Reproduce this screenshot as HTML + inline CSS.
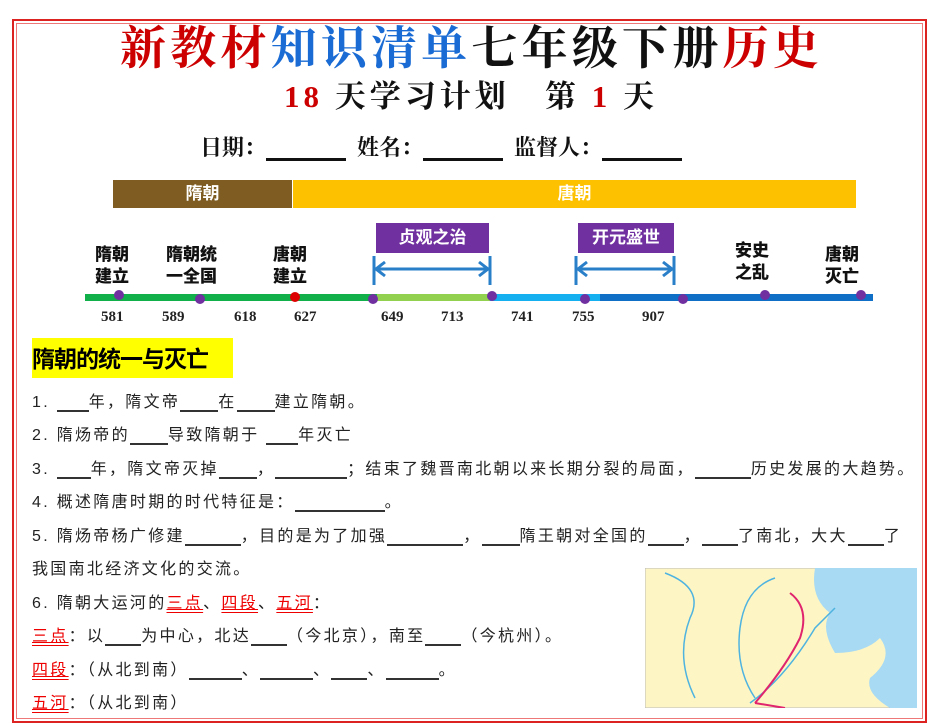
<!DOCTYPE html>
<html><head><meta charset="utf-8"><style>
body{margin:0;width:947px;height:705px;overflow:hidden;background:#fff;font-family:"Liberation Sans","Noto Sans CJK SC",sans-serif;position:relative}
.a{position:absolute;white-space:nowrap}
.b{position:absolute;left:12px;top:19px;width:911px;height:700px;border:2px solid #d22;box-shadow:inset 0 0 0 2px #fff,inset 0 0 0 3px #e77}
.serif{font-family:"Liberation Serif","Noto Serif CJK SC",serif;font-weight:bold}
.lbl{font-family:"Liberation Sans","Noto Sans CJK SC",sans-serif;font-weight:900;font-size:17px;line-height:22px;color:#111}
.yr{font-family:"Liberation Serif",serif;font-weight:bold;font-size:15px;color:#222}
.dot{position:absolute;width:10px;height:10px;border-radius:50%;background:#7030a0}
.q{font-size:16px;color:#222;letter-spacing:2.3px}
u{text-decoration:none;border-bottom:2px solid #333;display:inline-block;line-height:14px}
.r{color:#e00;text-decoration:underline double}
</style></head><body>
<div class="b"></div>
<div class="a serif" style="left:120px;top:22px;font-size:46px;line-height:54px;letter-spacing:4.2px"><span style="color:#c00">新教材</span><span style="color:#1a6bd4">知识清单</span><span style="color:#111">七年级下册</span><span style="color:#c00">历史</span></div>
<div class="a serif" style="left:284px;top:78px;font-size:31px;line-height:38px;color:#111;letter-spacing:4px"><span style="color:#c00">18</span> 天学习计划 &nbsp; 第 <span style="color:#c00">1</span> 天</div>
<div class="a serif" style="left:200px;top:133px;font-size:22px;line-height:30px;color:#111">日期：<u style="width:80px;border-bottom:3px solid #111;line-height:20px">&nbsp;</u> &nbsp;姓名：<u style="width:80px;border-bottom:3px solid #111;line-height:20px">&nbsp;</u> &nbsp;监督人：<u style="width:80px;border-bottom:3px solid #111;line-height:20px">&nbsp;</u></div>
<div class="a" style="left:113px;top:180px;width:179px;height:28px;background:#7f5d22;color:#fff;font-weight:bold;font-size:17px;line-height:28px;text-align:center">隋朝</div>
<div class="a" style="left:293px;top:180px;width:563px;height:28px;background:#fdc100;color:#fff;font-weight:bold;font-size:17px;line-height:28px;text-align:center">唐朝</div>
<div class="a" style="left:376px;top:223px;width:113px;height:30px;background:#7030a0;color:#fff;font-weight:bold;font-size:17px;line-height:30px;text-align:center">贞观之治</div>
<div class="a" style="left:578px;top:223px;width:96px;height:30px;background:#7030a0;color:#fff;font-weight:bold;font-size:17px;line-height:30px;text-align:center">开元盛世</div>
<svg class="a" style="left:0;top:0" width="947" height="330">
<g stroke="#2a7fc9" stroke-width="3" fill="none">
<line x1="374" y1="256" x2="374" y2="285"/><line x1="490" y1="256" x2="490" y2="285"/><line x1="376" y1="269" x2="488" y2="269"/><polyline points="385,262 376,269 385,276"/><polyline points="479,262 488,269 479,276"/>
<line x1="576" y1="256" x2="576" y2="285"/><line x1="674" y1="256" x2="674" y2="285"/><line x1="578" y1="269" x2="672" y2="269"/><polyline points="587,262 578,269 587,276"/><polyline points="663,262 672,269 663,276"/>
</g>
<rect x="85" y="294" width="292" height="7" fill="#12b04a"/>
<rect x="377" y="294" width="113" height="7" fill="#92d050"/>
<rect x="490" y="294" width="110" height="7" fill="#14b0f0"/>
<rect x="600" y="294" width="273" height="7" fill="#0f6fc6"/>
</svg>
<div class="dot" style="left:114px;top:290px"></div><div class="dot" style="left:195px;top:294px"></div>
<div class="dot" style="left:290px;top:292px;background:#d00"></div><div class="dot" style="left:368px;top:294px"></div>
<div class="dot" style="left:487px;top:291px"></div><div class="dot" style="left:580px;top:294px"></div>
<div class="dot" style="left:678px;top:294px"></div><div class="dot" style="left:760px;top:290px"></div><div class="dot" style="left:856px;top:290px"></div>
<div class="a lbl" style="left:95px;top:244px">隋朝<br>建立</div>
<div class="a lbl" style="left:166px;top:244px">隋朝统<br>一全国</div>
<div class="a lbl" style="left:273px;top:244px">唐朝<br>建立</div>
<div class="a lbl" style="left:735px;top:240px">安史<br>之乱</div>
<div class="a lbl" style="left:825px;top:244px">唐朝<br>灭亡</div>
<div class="a yr" style="left:101px;top:309px">581</div><div class="a yr" style="left:162px;top:309px">589</div>
<div class="a yr" style="left:234px;top:309px">618</div><div class="a yr" style="left:294px;top:309px">627</div>
<div class="a yr" style="left:381px;top:309px">649</div><div class="a yr" style="left:441px;top:309px">713</div>
<div class="a yr" style="left:511px;top:309px">741</div><div class="a yr" style="left:572px;top:309px">755</div>
<div class="a yr" style="left:642px;top:309px">907</div>
<div class="a" style="left:32px;top:338px;width:201px;height:40px;background:#ffff00;font-weight:bold;font-size:23px;line-height:42px;color:#000;letter-spacing:-1px">隋朝的统一与灭亡</div>
<div class="a q" style="left:32px;top:388px">1. <u style="width:32px">&nbsp;</u>年，隋文帝<u style="width:38px">&nbsp;</u>在<u style="width:38px">&nbsp;</u>建立隋朝。</div>
<div class="a q" style="left:32px;top:421px">2. 隋炀帝的<u style="width:38px">&nbsp;</u>导致隋朝于 <u style="width:32px">&nbsp;</u>年灭亡</div>
<div class="a q" style="left:32px;top:455px">3. <u style="width:34px">&nbsp;</u>年，隋文帝灭掉<u style="width:38px">&nbsp;</u>，<u style="width:72px">&nbsp;</u>；结束了魏晋南北朝以来长期分裂的局面，<u style="width:56px">&nbsp;</u>历史发展的大趋势。</div>
<div class="a q" style="left:32px;top:488px">4. 概述隋唐时期的时代特征是：<u style="width:90px">&nbsp;</u>。</div>
<div class="a q" style="left:32px;top:522px">5. 隋炀帝杨广修建<u style="width:56px">&nbsp;</u>，目的是为了加强<u style="width:76px">&nbsp;</u>，<u style="width:38px">&nbsp;</u>隋王朝对全国的<u style="width:36px">&nbsp;</u>，<u style="width:36px">&nbsp;</u>了南北，大大<u style="width:36px">&nbsp;</u>了</div>
<div class="a q" style="left:32px;top:555px">我国南北经济文化的交流。</div>
<div class="a q" style="left:32px;top:589px">6. 隋朝大运河的<span class="r">三点</span>、<span class="r">四段</span>、<span class="r">五河</span>：</div>
<div class="a q" style="left:32px;top:622px"><span class="r">三点</span>：以<u style="width:36px">&nbsp;</u>为中心，北达<u style="width:36px">&nbsp;</u>（今北京），南至<u style="width:36px">&nbsp;</u>（今杭州）。</div>
<div class="a q" style="left:32px;top:656px"><span class="r">四段</span>：（从北到南）<u style="width:53px">&nbsp;</u>、<u style="width:53px">&nbsp;</u>、<u style="width:36px">&nbsp;</u>、<u style="width:53px">&nbsp;</u>。</div>
<div class="a q" style="left:32px;top:689px"><span class="r">五河</span>：（从北到南）</div>
<svg class="a" style="left:645px;top:568px" width="272" height="140">
<rect width="272" height="140" fill="#fdf6c4" stroke="#bbb"/>
<path d="M170 0 Q165 30 185 45 Q175 60 190 85 Q220 85 235 70 Q250 90 225 110 Q220 125 245 140 L272 140 L272 0 Z" fill="#a8daf3"/>
<path d="M20 5 Q60 20 45 50 Q30 90 50 130 M130 10 Q100 20 95 60 Q90 100 110 130 M105 135 Q140 110 170 60 Q180 50 190 40" stroke="#4fb3e0" stroke-width="1.5" fill="none"/>
<path d="M145 25 Q165 40 155 70 Q140 100 110 135 M110 135 L140 140" stroke="#e0246e" stroke-width="2" fill="none"/>
</svg>
</body></html>
